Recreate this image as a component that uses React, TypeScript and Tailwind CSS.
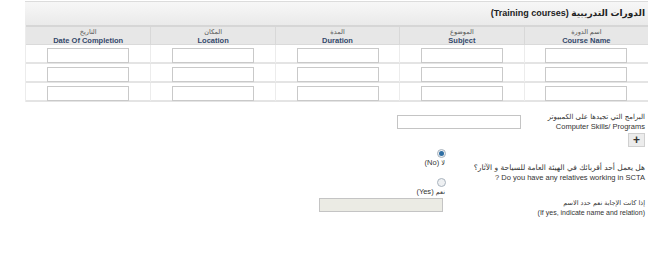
import React from 'react';

const cols = [
    { ar: 'اسم الدورة', en: 'Course Name' },
    { ar: 'الموضوع', en: 'Subject' },
    { ar: 'المدة', en: 'Duration' },
    { ar: 'المكان', en: 'Location' },
    { ar: 'التاريخ', en: 'Date Of Completion' },
];

const font = { fontFamily: '"Liberation Sans", "DejaVu Sans", sans-serif' };

const Cell: React.FC = () => (
    <div className="flex h-full items-start justify-center pt-[3px] border-l border-[#ececec] last:border-l-0">
        <input className="h-[15px] w-[82px] border border-[#c9c9c9] bg-white" />
    </div>
);

const Radio: React.FC<{ checked?: boolean }> = ({ checked }) => (
    <span className="flex h-[9px] w-[9px] items-center justify-center rounded-full border border-[#a9b3be] bg-[#eef0f2]">
        {checked && <span className="h-[5px] w-[5px] rounded-full bg-[#2f6ea3]" />}
    </span>
);

export default function App() {
    return (
        <div className="h-[258px] w-[655px] bg-white text-[#222]" style={font}>
            <div dir="rtl" className="ml-[25px] w-[623px] pt-px">
                <div className="border-t border-[#dcdcdc] bg-gradient-to-b from-[#f7f7f7] to-[#eaeaea] h-[24px] flex items-center pr-[3px] text-[9px] font-bold">
                    الدورات التدريبية (Training courses)
                </div>
                <div className="border-l border-[#ececec]">
                    <div className="grid grid-cols-5 h-[20px] border-t-2 border-[#d6d6d6] bg-[#e7e7e7] border-b border-b-[#dadada]">
                        {cols.map((c) => (
                            <div key={c.en} className="flex flex-col items-center justify-center leading-[9px] border-l border-[#d8d8d8] last:border-l-0">
                                <span className="text-[6.5px] text-[#555]">{c.ar}</span>
                                <span className="text-[7.5px] font-bold text-[#34496b]">{c.en}</span>
                            </div>
                        ))}
                    </div>
                    {[0, 1, 2].map((r) => (
                        <div key={r} className="grid grid-cols-5 h-[19px] border-b-2 border-[#e4e4e4]">
                            {cols.map((c) => <Cell key={c.en} />)}
                        </div>
                    ))}
                </div>

                <div className="mt-[10px] flex items-start">
                    <div className="w-[124px] pr-[3px] text-right leading-[10px] text-[#333]">
                        <div className="text-[7px] font-['DejaVu_Sans',sans-serif]">البرامج التي تجيدها على الكمبيوتر</div>
                        <div className="text-[7.5px]">Computer Skills/ Programs</div>
                    </div>
                    <input className="mr-[3px] mt-[3px] h-[14px] w-[124px] border border-[#c4c4c4] bg-white" />
                </div>
                <div className="mt-[1px] pr-[3px] flex">
                    <div className="flex h-[14px] w-[17px] items-center justify-center border border-[#d0d0d0] bg-[#ececec] text-[12px] font-bold leading-none text-[#333]">
                        +
                    </div>
                </div>

                <div className="flex mt-[2px]">
                    <div className="w-[203px] pr-[3px] self-center text-right leading-[10px] text-[#333]">
                        <div className="text-[7.5px] font-['DejaVu_Sans',sans-serif]">هل يعمل أحد أقربائك في الهيئة العامة للسياحة و الآثار؟</div>
                        <div className="text-[7.5px]">Do you have any relatives working in SCTA ?</div>
                    </div>
                    <div className="flex flex-col items-start text-[7.5px] leading-[9px] text-[#333]">
                        <div className="mr-[-1px]"><Radio checked /></div>
                        <div><span className="text-[6.5px] font-['DejaVu_Sans',sans-serif]">لا</span> (No)</div>
                        <div className="mr-[-1px] mt-[10px]"><Radio /></div>
                        <div><span className="text-[6.5px] font-['DejaVu_Sans',sans-serif]">نعم</span> (Yes)</div>
                    </div>
                </div>

                <div className="flex mt-[1px]">
                    <div className="w-[203px] pr-[3px] text-right leading-[10px] text-[#333]">
                        <div className="text-[6.5px] font-['DejaVu_Sans',sans-serif]">إذا كانت الإجابة نعم حدد الاسم</div>
                        <div className="text-[7px]">(If yes, indicate name and relation)</div>
                    </div>
                    <input disabled className="mr-[2px] h-[14px] w-[124px] border border-[#c4c4c4] bg-[#ebebe4]" />
                </div>
            </div>
        </div>
    );
}
